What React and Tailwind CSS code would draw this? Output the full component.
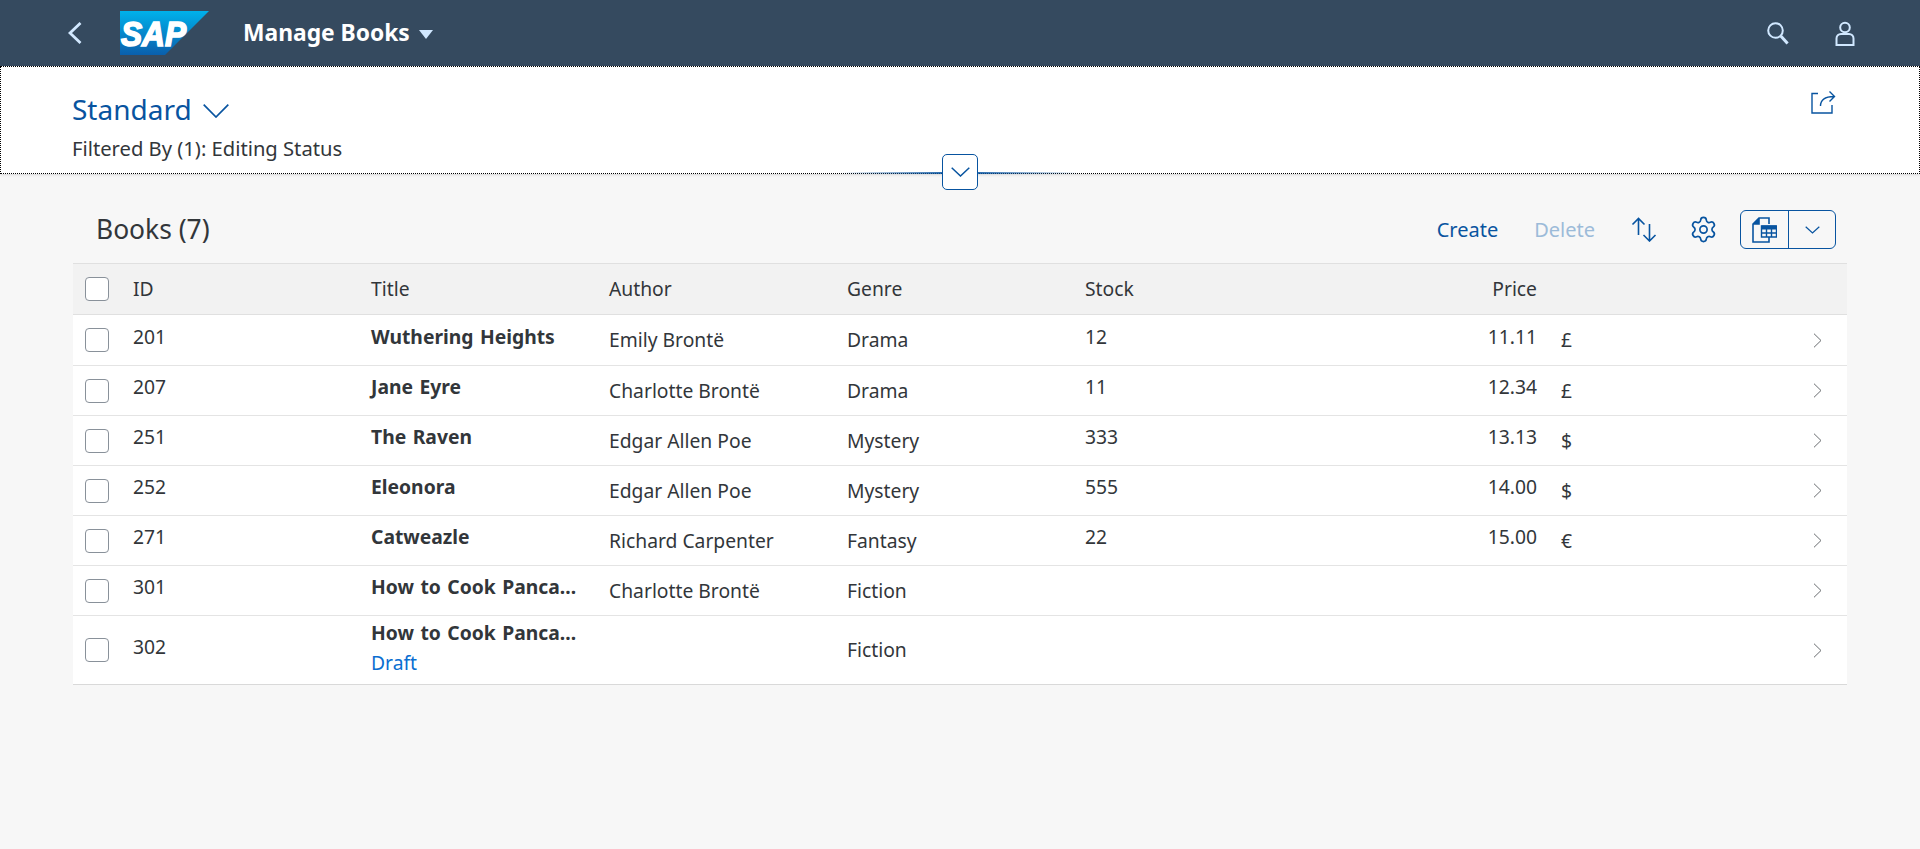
import React from 'react';
import { Settings } from 'lucide-react';

const books = [
  { id: '201', title: 'Wuthering Heights', author: 'Emily Brontë', genre: 'Drama', stock: '12', price: '11.11', cur: '£' },
  { id: '207', title: 'Jane Eyre', author: 'Charlotte Brontë', genre: 'Drama', stock: '11', price: '12.34', cur: '£' },
  { id: '251', title: 'The Raven', author: 'Edgar Allen Poe', genre: 'Mystery', stock: '333', price: '13.13', cur: '$' },
  { id: '252', title: 'Eleonora', author: 'Edgar Allen Poe', genre: 'Mystery', stock: '555', price: '14.00', cur: '$' },
  { id: '271', title: 'Catweazle', author: 'Richard Carpenter', genre: 'Fantasy', stock: '22', price: '15.00', cur: '€' },
  { id: '301', title: 'How to Cook Panca...', author: 'Charlotte Brontë', genre: 'Fiction', stock: '', price: '', cur: '' },
  { id: '302', title: 'How to Cook Panca...', author: '', genre: 'Fiction', stock: '', price: '', cur: '', draft: true },
];

const gridCols = 'grid grid-cols-[48px_repeat(7,238px)_60px] items-center';

const Checkbox = () => (
  <div className="ml-3 w-6 h-6 bg-white border border-[#89919a] rounded-[4px]"></div>
);

// thin V shaped chevron, the SAP icons are wider than the lucide ones
const Vee = ({ w, h, stroke = 1.5 }) => (
  <svg width={w} height={h} viewBox={`0 0 ${w} ${h}`} fill="none" stroke="currentColor" strokeWidth={stroke}>
    <path d={`M0.7 0.7L${w / 2} ${h - 1}L${w - 0.7} 0.7`} />
  </svg>
);

const SapLogo = () => (
  <svg width="90" height="44" viewBox="0 0 90 44">
    <defs>
      <linearGradient id="sapBlue" x1="0" y1="0" x2="0" y2="1">
        <stop offset="0" stopColor="#00b1eb" />
        <stop offset="1" stopColor="#0a5fac" />
      </linearGradient>
    </defs>
    <polygon points="0,0 89,0 45,44 0,44" fill="url(#sapBlue)" />
    <text x="1" y="35" fill="#ffffff" stroke="#ffffff" strokeWidth="1.7" fontFamily="Liberation Sans" fontWeight="700" fontStyle="italic" fontSize="35" textLength="65" lengthAdjust="spacingAndGlyphs">SAP</text>
  </svg>
);

const BackIcon = () => (
  <svg width="14" height="22" viewBox="0 0 14 22" fill="none" stroke="#d1e8ff" strokeWidth="2.8">
    <path d="M12.5 1L2 11l10.5 10" />
  </svg>
);

const SearchIcon = () => (
  <svg width="22" height="23" viewBox="0 0 22 23" fill="none" stroke="#d1e8ff" strokeWidth="2">
    <circle cx="8.5" cy="8.5" r="7.3" />
    <path d="M13.8 14l6.8 7.5" strokeWidth="3" />
  </svg>
);

const UserIcon = () => (
  <svg width="20" height="25" viewBox="0 0 20 25" fill="none" stroke="#d1e8ff" strokeWidth="2">
    <circle cx="10" cy="6.5" r="4.8" />
    <path d="M1.5 24v-6.5c0-2.5 2-4.5 4.5-4.5h8c2.5 0 4.5 2 4.5 4.5V24z" />
  </svg>
);

const ShareIcon = () => (
  <svg width="25" height="24" viewBox="0 0 25 24" fill="none" stroke="#0854a0" strokeWidth="1.4">
    <path d="M7 3.5H1v19.5h20V15" />
    <path d="M9.5 16c0-6 4-9.5 13.5-9.5M18.5 1.5l5 5-5 5" />
  </svg>
);

const SortIcon = () => (
  <svg width="26" height="25" viewBox="0 0 26 25" fill="none" stroke="#0854a0" strokeWidth="1.6">
    <path d="M7.5 18V1.5M1.5 7.5l6-6 6 6" />
    <path d="M18.5 7v17M12.5 18l6 6 6-6" />
  </svg>
);

const TableIcon = () => (
  <svg width="25" height="26" viewBox="0 0 25 26" fill="none" stroke="#0854a0" strokeWidth="1.6">
    <path d="M17 7V1H7L1 7v18h16v-5" />
    <path d="M7 1v6H1" fill="#0854a0" />
    <path d="M9.5 9h15v11h-15z" fill="#f7f7f7" strokeWidth="1.4" />
    <path d="M9.5 9h15v3h-15z" fill="#0854a0" strokeWidth="1" />
    <path d="M9.5 16h15M14.5 12v8M19.5 12v8" strokeWidth="1.4" />
  </svg>
);

const RowArrow = () => (
  <svg width="9" height="15" viewBox="0 0 9 15" fill="none" stroke="#6a6d70" strokeWidth="1">
    <path d="M1 0.7L8 7.5L1 14.3" />
  </svg>
);

const Row = ({ book, first }) => (
  <div className={`${gridCols} bg-white border-b ${book.draft ? 'h-[69px] border-[#d9d9d9]' : first ? 'h-[51px] border-[#e4e4e4]' : 'h-[50px] border-[#e4e4e4]'}`}>
    <Checkbox />
    <div className="px-3 pb-[6px]">{book.id}</div>
    <div className="px-3 pb-[6px]">
      <div className="font-bold whitespace-nowrap [word-spacing:1.5px]">{book.title}</div>
      {book.draft && <div className="text-[#0a6ed1] leading-[24px] mt-[3px]">Draft</div>}
    </div>
    <div className="px-3 pt-[1px]">{book.author}</div>
    <div className="px-3 pt-[1px]">{book.genre}</div>
    <div className="px-3 pb-[6px]">{book.stock}</div>
    <div className="px-3 pb-[6px] text-right">{book.price}</div>
    <div className="px-3 pt-[1px]">{book.cur}</div>
    <div className="flex justify-center">
      <RowArrow />
    </div>
  </div>
);

const App = () => {
  return (
    <div className="min-h-screen bg-[#f7f7f7] text-[#32363a] text-[19.3px] font-['Noto_Sans',sans-serif]">
      <header className="h-[66px] bg-[#354a5f] flex items-center pl-[68px] pr-[65px]">
        <BackIcon />
        <div className="ml-[38px]"><SapLogo /></div>
        <div className="ml-[33px] text-white font-bold text-[22.8px]">Manage Books</div>
        <div className="ml-[9px] mt-[2px] w-0 h-0 border-x-[7px] border-x-transparent border-t-[9px] border-t-[#d1e8ff]"></div>
        <div className="ml-auto flex items-center gap-[46px]">
          <SearchIcon />
          <UserIcon />
        </div>
      </header>

      <section className="relative h-[108px] bg-white border border-dotted border-black shadow-sm px-[71px] pt-[23px]">
        <div className="flex items-center text-[#0854a0] text-[28px] leading-[38px]">
          Standard
          <div className="ml-[11px] mt-[4px]"><Vee w={26} h={14} stroke={1.7} /></div>
        </div>
        <div className="mt-[8px] text-[20.2px] leading-6">Filtered By (1): Editing Status</div>
        <div className="absolute right-[83px] top-[23px]"><ShareIcon /></div>
        <div className="absolute left-[840px] right-[840px] -bottom-px h-[2px] bg-gradient-to-r from-transparent via-[#0854a0] to-transparent"></div>
        <div className="absolute left-[941px] top-[87px] w-[36px] h-[36px] flex items-center justify-center bg-white border border-[#0854a0] rounded-[5px] text-[#0854a0]">
          <Vee w={19} h={10} stroke={1.5} />
        </div>
      </section>

      <main className="pl-[73px] pr-[73px]">
        <div className="h-[89px] flex items-center pl-[23px] pr-[11px] pt-[22px]">
          <h2 className="text-[26.4px]">Books (7)</h2>
          <div className="ml-auto flex items-center text-[#0854a0] text-[20px]">
            <span>Create</span>
            <span className="ml-[36px] text-[#9cbbd9]">Delete</span>
            <div className="ml-[36px]"><SortIcon /></div>
            <Settings size={29} strokeWidth={1.4} className="ml-[32px]" />
            <div className="ml-[22px] w-[96px] h-[39px] flex border border-[#0854a0] rounded-[6px]">
              <div className="w-[48px] flex items-center justify-center border-r border-[#0854a0]"><TableIcon /></div>
              <div className="flex-1 flex items-center justify-center"><Vee w={15} h={8} stroke={1.2} /></div>
            </div>
          </div>
        </div>

        <div className={`${gridCols} h-[52px] bg-[#f2f2f2] border-y border-[#e0e0e0]`}>
          <Checkbox />
          <div className="px-3">ID</div>
          <div className="px-3">Title</div>
          <div className="px-3">Author</div>
          <div className="px-3">Genre</div>
          <div className="px-3">Stock</div>
          <div className="px-3 text-right">Price</div>
        </div>
        {books.map((book, i) => (
          <Row key={book.id} book={book} first={i === 0} />
        ))}
      </main>
    </div>
  );
};

export default App;
